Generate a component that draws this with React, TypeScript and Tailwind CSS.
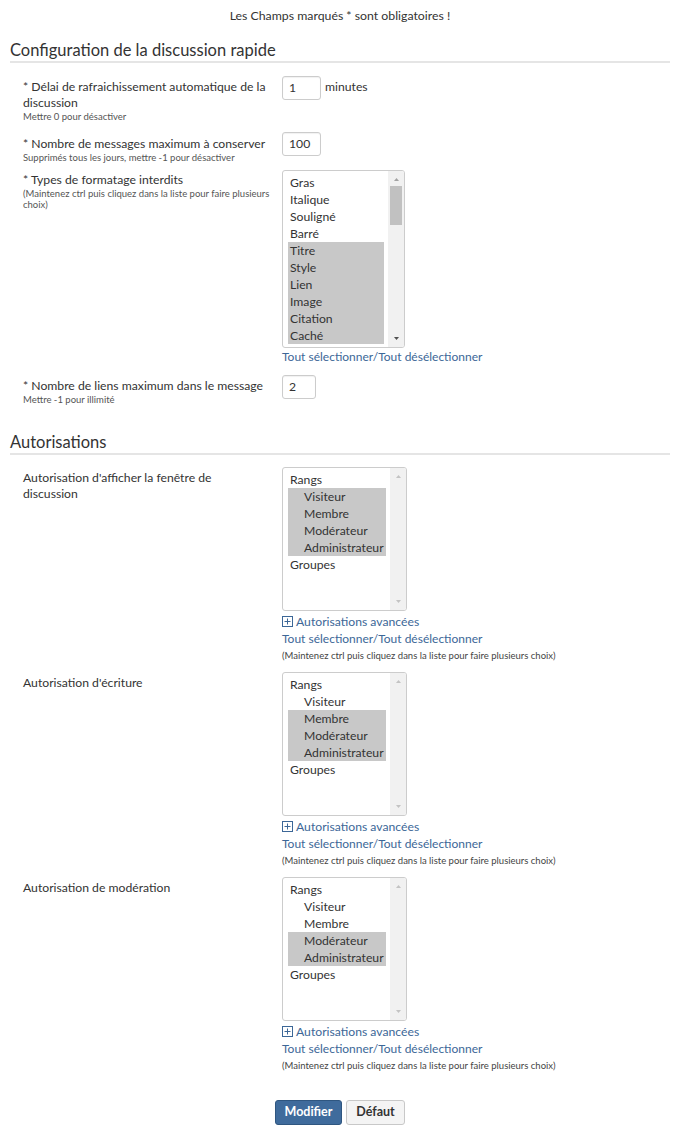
import React from 'react'

const font = { fontFamily: 'Lato, "Open Sans", sans-serif' }

function Heading({ children }: { children: React.ReactNode }) {
  return (
    <h2 className="mx-[10px] border-b-2 border-[#e5e5e5] pb-[1px] text-[16.5px] leading-[20px] text-[#333]">
      {children}
    </h2>
  )
}

function Label({ title, hint, pr = 'pr-[9px]' }: { title: React.ReactNode; hint?: React.ReactNode; pr?: string }) {
  return (
    <div className={`w-[259px] shrink-0 ${pr}`}>
      <div className="text-[12.2px] leading-[16px] text-[#333]">{title}</div>
      {hint && <div className="text-[9.5px] leading-[11px] text-[#555]">{hint}</div>}
    </div>
  )
}

function TextInput({ value, w }: { value: string; w: string }) {
  return (
    <div
      className={`${w} flex h-[24px] items-center rounded-[3px] border border-[#ccc] bg-white px-[6px] text-[12.2px] text-[#333] shadow-[inset_0_1px_1px_rgba(0,0,0,0.06)]`}
    >
      {value}
    </div>
  )
}

function ScrollBar({ thumb }: { thumb: boolean }) {
  return (
    <div className="flex w-[16px] flex-col items-center bg-[#f1f1f1]">
      <svg width="7" height="14" viewBox="0 0 7 14" className="mt-[1px]">
        <path d="M3.5 6 L6 9 L1 9 Z" fill={thumb ? '#a3a3a3' : '#c3c3c3'} />
      </svg>
      {thumb && <div className="h-[39px] w-[12px] bg-[#c1c1c1]" />}
      <div className="flex-1" />
      <svg width="7" height="14" viewBox="0 0 7 14" className="mb-[1px]">
        <path d="M1 5 L6 5 L3.5 8 Z" fill={thumb ? '#505050' : '#c3c3c3'} />
      </svg>
    </div>
  )
}

type Opt = { label: string; sel?: boolean; indent?: boolean }

function ListBox({ opts, w, h, thumb }: { opts: Opt[]; w: string; h: string; thumb: boolean }) {
  return (
    <div className={`${w} ${h} flex overflow-hidden rounded-[3px] border border-[#ccc] bg-white`}>
      <div className="flex-1 pl-[5px] pr-[4px] pt-[3px]">
        {opts.map((o) => (
          <div
            key={o.label}
            className={`h-[17px] whitespace-nowrap text-[12.2px] leading-[17px] text-[#333] ${o.indent ? 'pl-[16px]' : 'pl-[2px]'} ${
              o.sel ? 'bg-[#c8c8c8]' : ''
            }`}
          >
            {o.label}
          </div>
        ))}
      </div>
      <ScrollBar thumb={thumb} />
    </div>
  )
}

function PlusBox() {
  return (
    <svg width="11" height="11" viewBox="0 0 11 11" className="mr-[3px] inline-block align-[-1px]">
      <rect x="0.5" y="0.5" width="10" height="10" fill="none" stroke="#3c6797" />
      <path d="M5.5 2.5 V8.5 M2.5 5.5 H8.5" stroke="#3c6797" />
    </svg>
  )
}

function PermRow({ title, selFrom }: { title: React.ReactNode; selFrom: number }) {
  const names = ['Visiteur', 'Membre', 'Modérateur', 'Administrateur']
  const opts: Opt[] = [
    { label: 'Rangs' },
    ...names.map((n, i) => ({ label: n, indent: true, sel: i >= selFrom })),
    { label: 'Groupes' },
  ]
  return (
    <div className="flex pl-[23px]">
      <div className="pt-[3px]">
        <Label title={title} pr="pr-[30px]" />
      </div>
      <div>
        <ListBox opts={opts} w="w-[125px]" h="h-[144px]" thumb={false} />
        <div className="mt-[2px] text-[12.2px] leading-[17px] text-[#3c6797]">
          <PlusBox />
          Autorisations avancées
        </div>
        <div className="text-[12px] leading-[17px] text-[#3c6797]">Tout sélectionner/Tout désélectionner</div>
        <div className="mt-[3px] text-[9.5px] leading-[12px] text-[#444]">
          (Maintenez ctrl puis cliquez dans la liste pour faire plusieurs choix)
        </div>
      </div>
    </div>
  )
}

export default function App() {
  const formats: Opt[] = [
    { label: 'Gras' },
    { label: 'Italique' },
    { label: 'Souligné' },
    { label: 'Barré' },
    { label: 'Titre', sel: true },
    { label: 'Style', sel: true },
    { label: 'Lien', sel: true },
    { label: 'Image', sel: true },
    { label: 'Citation', sel: true },
    { label: 'Caché', sel: true },
  ]

  return (
    <div className="min-h-[1131px] w-[680px] bg-white pb-[8px]" style={font}>
      <p className="pt-[8px] text-center text-[12.3px] leading-[16px] text-[#333]">
        Les Champs marqués * sont obligatoires !
      </p>

      <div className="mt-[16px]">
        <Heading>Configuration de la discussion rapide</Heading>
      </div>

      <div className="mt-[13px] flex pl-[23px]">
        <div className="pt-[3px]">
          <Label title="* Délai de rafraichissement automatique de la discussion" hint="Mettre 0 pour désactiver" />
        </div>
        <TextInput value="1" w="w-[39px]" />
        <span className="ml-[4px] pt-[3px] text-[12.2px] leading-[16px] text-[#333]">minutes</span>
      </div>

      <div className="mt-[10px] flex pl-[23px]">
        <div className="pt-[4px]">
          <Label title="* Nombre de messages maximum à conserver" hint="Supprimés tous les jours, mettre -1 pour désactiver" />
        </div>
        <TextInput value="100" w="w-[39px]" />
      </div>

      <div className="mt-[7px] flex pl-[23px]">
        <div className="pt-[2px]">
          <Label
            title="* Types de formatage interdits"
            hint="(Maintenez ctrl puis cliquez dans la liste pour faire plusieurs choix)"
          />
        </div>
        <div>
          <ListBox opts={formats} w="w-[123px]" h="h-[178px]" thumb={true} />
          <div className="text-[12px] leading-[17px] text-[#3c6797]">Tout sélectionner/Tout désélectionner</div>
        </div>
      </div>

      <div className="mt-[10px] flex pl-[23px]">
        <div className="pt-[3px]">
          <Label title="* Nombre de liens maximum dans le message" hint="Mettre -1 pour illimité" />
        </div>
        <TextInput value="2" w="w-[34px]" />
      </div>

      <div className="mt-[27px]">
        <Heading>Autorisations</Heading>
      </div>

      <div className="mt-[12px] flex flex-col gap-[10px]">
        <PermRow title="Autorisation d'afficher la fenêtre de discussion" selFrom={0} />
        <PermRow title="Autorisation d'écriture" selFrom={1} />
        <PermRow title="Autorisation de modération" selFrom={2} />
      </div>

      <div className="mt-[28px] flex justify-center gap-[4px]">
        <button className="h-[25px] w-[67px] rounded-[3px] border border-[#2f5680] bg-[#3f6b9c] text-[12.5px] font-bold text-white">
          Modifier
        </button>
        <button className="h-[25px] w-[59px] rounded-[3px] border border-[#c8c8c8] bg-[#f4f4f4] text-[12.5px] font-bold text-[#333]">
          Défaut
        </button>
      </div>
    </div>
  )
}
